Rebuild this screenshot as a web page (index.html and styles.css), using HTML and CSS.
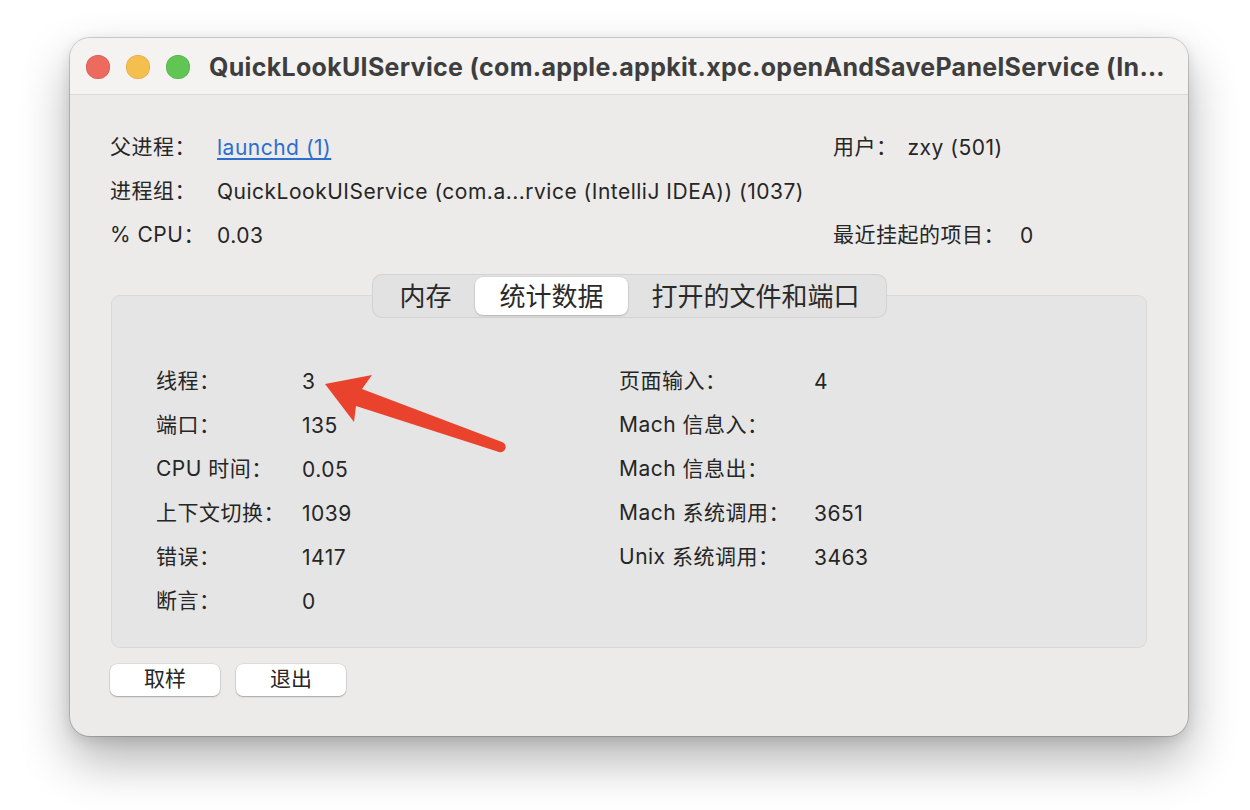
FILE: index.html
```html
<!DOCTYPE html>
<html lang="zh-CN">
<head>
<meta charset="utf-8">
<title>QuickLookUIService</title>
<link rel="stylesheet" href="styles.css">
</head>
<body>
<div class="window">
  <div class="titlebar">
    <div class="lights">
      <span class="light red"></span>
      <span class="light yellow"></span>
      <span class="light green"></span>
    </div>
    <div class="title">QuickLookUIService (com.apple.appkit.xpc.openAndSavePanelService (In…</div>
  </div>
  <div class="content">
    <div class="info">
      <div class="lbl">父进程：</div>
      <div class="val"><a class="link" href="#">launchd (1)</a></div>
      <div class="pair"><span class="lbl">用户：</span><span class="val">zxy (501)</span></div>

      <div class="lbl">进程组：</div>
      <div class="val span2">QuickLookUIService (com.a...rvice (IntelliJ IDEA)) (1037)</div>

      <div class="lbl">% CPU：</div>
      <div class="val">0.03</div>
      <div class="pair"><span class="lbl">最近挂起的项目：</span><span class="val wide">0</span></div>
    </div>

    <div class="tabs">
      <div class="tab">内存</div>
      <div class="tab selected">统计数据</div>
      <div class="tab">打开的文件和端口</div>
    </div>

    <div class="groupbox">
      <div class="stats">
        <div class="lbl">线程：</div><div class="val">3</div>
        <div class="lbl">页面输入：</div><div class="val">4</div>

        <div class="lbl">端口：</div><div class="val">135</div>
        <div class="lbl">Mach 信息入：</div><div class="val"></div>

        <div class="lbl">CPU 时间：</div><div class="val">0.05</div>
        <div class="lbl">Mach 信息出：</div><div class="val"></div>

        <div class="lbl">上下文切换：</div><div class="val">1039</div>
        <div class="lbl">Mach 系统调用：</div><div class="val">3651</div>

        <div class="lbl">错误：</div><div class="val">1417</div>
        <div class="lbl">Unix 系统调用：</div><div class="val">3463</div>

        <div class="lbl">断言：</div><div class="val">0</div>
        <div class="lbl"></div><div class="val"></div>
      </div>
    </div>

    <div class="buttons">
      <button class="btn">取样</button>
      <button class="btn">退出</button>
    </div>
  </div>
</div>

<svg class="annotation" width="1250" height="810" viewBox="0 0 1250 810" xmlns="http://www.w3.org/2000/svg">
  <path d="M325 384 L372 375 L362 389 L502 442 A5 5 0 0 1 499 452 L356 406 L354 422 Z" fill="#e9432e"/>
</svg>
</body>
</html>
```

FILE: styles.css
```css
* { box-sizing: border-box; }

html, body {
  margin: 0;
  padding: 0;
}

body {
  width: 1250px;
  height: 810px;
  background: #ffffff;
  font-family: "Inter", "Noto Sans CJK SC", sans-serif;
  color: #262626;
  overflow: hidden;
  position: relative;
}

.window {
  margin: 38px 0 0 70px;
  width: 1118px;
  height: 698px;
  background: #ecebea;
  border-radius: 20px;
  box-shadow: 0 0 0 1px rgba(0,0,0,0.16), 0 24px 50px rgba(0,0,0,0.30), 0 4px 14px rgba(0,0,0,0.12);
  display: flex;
  flex-direction: column;
  overflow: hidden;
}

.titlebar {
  height: 57px;
  flex: none;
  display: flex;
  align-items: center;
  background: #f4f3f2;
  border-bottom: 1px solid #d9d8d7;
  padding-left: 16px;
}

.lights {
  display: flex;
  gap: 16px;
  margin-top: 1px;
}

.light {
  width: 24px;
  height: 24px;
  border-radius: 50%;
  display: block;
}
.light.red { background: #ed6a5e; box-shadow: inset 0 0 0 0.5px rgba(160,40,30,0.4); }
.light.yellow { background: #f5bf4f; box-shadow: inset 0 0 0 0.5px rgba(170,120,20,0.4); }
.light.green { background: #61c554; box-shadow: inset 0 0 0 0.5px rgba(40,120,30,0.4); }

.title {
  margin-left: 19px;
  font-weight: 700;
  font-size: 25px;
  letter-spacing: 0.3px;
  color: #3e3e3e;
  white-space: nowrap;
  margin-top: 1px;
}

.content {
  flex: 1;
  display: flex;
  flex-direction: column;
  padding: 31px 41px 0 40px;
}

.info {
  display: grid;
  grid-template-columns: 107px 616px auto;
  grid-auto-rows: 44px;
  font-size: 21px;
  letter-spacing: 0.5px;
  align-items: center;
  line-height: 1.2;
}

.info .lbl, .stats .lbl { margin-top: -3px; }

.info .span2 { grid-column: 2 / 4; }

.pair {
  display: flex;
  align-items: center;
  gap: 10px;
}

.pair .val.wide { margin-left: 5px; }

.link {
  color: #2d6dd0;
  text-decoration: underline;
  text-underline-offset: 3px;
  text-decoration-thickness: 1.5px;
}

.lbl, .val { white-space: nowrap; }

.tabs {
  align-self: center;
  margin-top: 16px;
  margin-left: 2px;
  height: 44px;
  display: flex;
  align-items: stretch;
  padding: 2px;
  background: #e2e2e2;
  border: 1px solid rgba(0,0,0,0.07);
  border-radius: 10px;
  font-size: 26px;
  position: relative;
  z-index: 1;
}

.tab {
  display: flex;
  align-items: center;
  padding: 0 24px 3px;
  border-radius: 8px;
  color: #2a2a2a;
}

.tab.selected {
  background: #ffffff;
  box-shadow: 0 1px 2px rgba(0,0,0,0.18), 0 0 0 0.5px rgba(0,0,0,0.08);
}

.groupbox {
  margin-top: -23px;
  margin-left: 1px;
  height: 353px;
  background: #e5e5e5;
  border: 1px solid rgba(0,0,0,0.05);
  border-radius: 9px;
  padding: 64px 0 0 44px;
}

.stats {
  display: grid;
  grid-template-columns: 146px 317px 195px auto;
  grid-auto-rows: 44px;
  align-items: center;
  font-size: 21px;
  letter-spacing: 0.5px;
  line-height: 1.2;
}

.buttons {
  display: flex;
  gap: 16px;
  margin-top: 16px;
}

.btn {
  width: 110px;
  height: 32px;
  border: none;
  border-radius: 7px;
  background: #ffffff;
  box-shadow: 0 0 0 0.5px rgba(0,0,0,0.12), 0 1px 1.5px rgba(0,0,0,0.25);
  font-family: "Inter", "Noto Sans CJK SC", sans-serif;
  font-size: 21px;
  color: #262626;
  padding: 0 0 2px;
  line-height: 30px;
}

.annotation {
  position: absolute;
  left: 0;
  top: 0;
  pointer-events: none;
}
```
